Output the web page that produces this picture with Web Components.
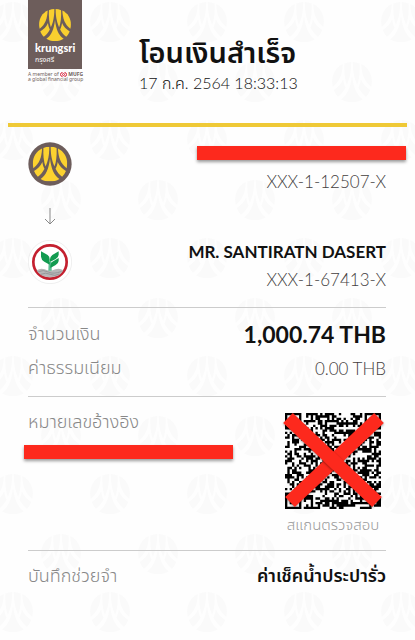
<!DOCTYPE html>
<html lang="th">
<head>
<meta charset="utf-8">
<meta name="viewport" content="width=device-width, initial-scale=1">
<title>โอนเงินสำเร็จ</title>
<style>
    body {
        margin: 0;
        background: #fefefe;
        color: #111;
        font-family: Lato, "Noto Sans Thai", "Noto Sans", sans-serif;
    }
</style>
</head>
<body>
<transfer-slip></transfer-slip>

<script>
const petals = `
    <path d="M27 5C26 30 20 48 2 62C-4 36 7 15 27 5Z"/>
    <path d="M31 4Q39 0 48 0C48 25 44 42 37 57C32 44 30 25 31 4Z"/>
    <path d="M69 4Q61 0 52 0C52 25 56 42 63 57C68 44 70 25 69 4Z"/>
    <path d="M73 5C74 30 80 48 98 62C104 36 93 15 73 5Z"/>
    <path d="M28 44C29 52 31 58 34 64C29 74 22 82 15 87Q8 80 4 70C14 64 23 56 28 44Z"/>
    <path d="M72 44C71 52 69 58 66 64C71 74 78 82 85 87Q92 80 96 70C86 64 77 56 72 44Z"/>
    <path d="M50 34C53 62 62 84 77 93C61 103 39 103 23 93C38 84 47 62 50 34Z"/>`;

function define(name, html, setup) {
    const template = document.createElement('template');
    template.innerHTML = html;
    customElements.define(name, class extends HTMLElement {
        constructor() {
            super();
            this.attachShadow({ mode: 'open' }).appendChild(template.content.cloneNode(true));
        }
        connectedCallback() {
            if (setup) setup(this.shadowRoot, this);
        }
    });
}

define('slip-watermark', `
    <style>
        :host { position: absolute; inset: 0; z-index: -1; overflow: hidden; }
        svg { display: block; width: 100%; height: 100%; }
    </style>
    <svg aria-hidden="true">
        <defs>
            <symbol id="mark" viewBox="0 0 100 100">${petals}</symbol>
            <pattern id="tile" x="-36" y="0" width="97" height="118" patternUnits="userSpaceOnUse" fill="#fafafa">
                <use href="#mark" x="29" y="2" width="40" height="40"/>
                <use href="#mark" x="-20" y="62" width="40" height="40"/>
                <use href="#mark" x="77" y="62" width="40" height="40"/>
            </pattern>
        </defs>
        <rect width="100%" height="100%" fill="url(#tile)"/>
    </svg>`);

define('krungsri-logo', `
    <style>
        :host { display: block; width: 54px; color: #6d5d5b; }
        .box { display: flex; flex-direction: column; height: 69px; box-sizing: border-box; padding: 9px 7px 0; background: #6d5d5b; color: #fff; }
        .box svg { display: block; width: 32px; height: 32px; margin: 0 auto 1px; fill: #f9cf2f; }
        .name { font-size: 11px; line-height: 12px; font-weight: 900; }
        .thai { font-size: 7px; line-height: 10px; }
        .member { width: max-content; margin-top: 3px; font: 5px/5px "Noto Sans", sans-serif; }
        .member svg { width: 7px; height: 5px; vertical-align: top; }
    </style>
    <div class="box">
        <svg viewBox="0 0 100 100">${petals}</svg>
        <span class="name">krungsri</span>
        <span class="thai">กรุงศรี</span>
    </div>
    <div class="member">A member of <svg viewBox="0 0 14 10" fill="none" stroke="#d8213b" stroke-width="2"><path d="M5 1a4 4 0 0 0 0 8M9 1a4 4 0 0 1 0 8"/><circle cx="7" cy="5" r="2"/></svg> <b>MUFG</b><br>a global financial group</div>`);

define('bank-badge', `
    <style>
        :host { display: block; width: 44px; height: 44px; }
        .badge { display: block; width: 100%; height: 100%; }
    </style>
    <svg class="badge" viewBox="0 0 132 132"></svg>`, (root, host) => {
    const marks = {
        krungsri: `
            <circle cx="66" cy="66" r="65" fill="#6d5d5b"/>
            <svg x="14" y="14" width="104" height="104" viewBox="0 0 100 100" fill="#fcd22f">${petals}</svg>`,
        kasikorn: `
            <circle cx="66" cy="66" r="65" fill="#fff" stroke="#e7e7e7" stroke-width="2"/>
            <circle cx="66" cy="66" r="50" fill="#fff" stroke="#c4202f" stroke-width="8"/>
            <path d="M26 91Q38 83 50 88Q66 95 82 88Q95 83 106 91Q99 105 85 109Q66 115 47 109Q32 103 26 91Z" fill="#b6b7b8"/>
            <path d="M31 95Q46 88 61 96T101 94M39 103Q53 96 67 103T94 102" fill="none" stroke="#858889" stroke-width="2"/>
            <path d="M61 92L62 66H71V92Z" fill="#58bd91"/>
            <path d="M39 34L59 45Q65 49 65 58V74L49 65Q40 60 39 50Z" fill="#129b50"/>
            <path d="M92 34V44Q91 53 83 57L66 66V58Q66 50 73 45Z" fill="#129b50"/>
            <path d="M92 54V63Q91 71 83 75L67 84V77Q67 70 73 65Z" fill="#129b50"/>`
    };
    root.querySelector('.badge').innerHTML = marks[host.getAttribute('bank')];
});

define('redaction-bar', `
    <style>
        :host { display: block; height: 14px; background: #fd291d; box-shadow: 0 2px 3px rgba(0, 0, 0, .4); }
    </style>`);

define('slip-header', `
    <style>
        :host { display: flex; height: 123px; margin: 0 8px; padding: 0 20px; border-bottom: 4px solid #efc936; }
        .title { margin-left: 57px; padding-top: 32px; }
        h1 { margin: 0; font-size: 29px; line-height: 40px; font-weight: 600; white-space: nowrap; }
        time { display: block; font-size: 16px; line-height: 22px; font-weight: 300; white-space: nowrap; }
    </style>
    <krungsri-logo></krungsri-logo>
    <div class="title">
        <h1><slot></slot></h1>
        <time datetime="2021-07-17T18:33:13">17 ก.ค. 2564 18:33:13</time>
    </div>`);

define('slip-account', `
    <style>
        :host { display: flex; justify-content: space-between; align-items: flex-start; }
        .info { display: flex; flex-direction: column; align-items: flex-end; }
        .name { display: flex; height: 22px; align-items: center; font-size: 17px; font-weight: 700; }
        .number { font-size: 17px; line-height: 36px; font-weight: 300; color: #443e3e; }
    </style>
    <slot name="badge"></slot>
    <div class="info">
        <div class="name"><slot name="name"></slot></div>
        <div class="number"><slot></slot></div>
    </div>`);

define('slip-row', `
    <style>
        :host { display: flex; justify-content: space-between; align-items: center; height: 34px; }
        .label { font-size: 18px; font-weight: 300; color: #888; }
        .value { font-size: 17px; font-weight: 300; color: #443e3e; }
        :host([strong]) .value { font-size: 18px; font-weight: 600; color: #111; }
        :host([large]) .value { font-size: 23px; font-weight: 700; }
    </style>
    <span class="label"><slot name="label"></slot></span>
    <span class="value"><slot></slot></span>`);

define('qr-code', `
    <style>
        :host { display: block; position: relative; width: 96px; height: 96px; }
        svg { display: block; width: 100%; height: 100%; overflow: visible; }
        .cross { position: absolute; inset: 0; }
        .cross path { filter: drop-shadow(0 1px 1px rgba(0, 0, 0, .4)); }
    </style>
    <svg class="code" viewBox="0 0 41 41"><path/></svg>
    <svg class="cross" viewBox="0 0 96 96" stroke="#fd291d" stroke-width="14">
        <path d="M94 5L5 89"/>
        <path d="M3 5L92 89"/>
    </svg>`, root => {
    const size = 41;
    const finder = (x, y) => {
        const ring = Math.max(Math.abs(x - 3), Math.abs(y - 3));
        return ring === 3 || ring < 2;
    };
    let seed = 2564;
    let d = '';
    for (let y = 0; y < size; y++) {
        for (let x = 0; x < size; x++) {
            seed = (seed * 1103515245 + 12345) % 2147483648;
            let on = seed / 2147483648 < 0.52;
            const fx = x > 32 ? x - 34 : x;
            const fy = y > 32 ? y - 34 : y;
            if (fx < 8 && fy < 8 && !(x > 32 && y > 32)) {
                on = fx >= 0 && fy >= 0 && fx < 7 && fy < 7 && finder(fx, fy);
            }
            if (on) d += `M${x} ${y}h1v1h-1z`;
        }
    }
    root.querySelector('.code path').setAttribute('d', d);
});

define('transfer-slip', `
    <style>
        :host { display: block; position: relative; z-index: 0; min-height: 100vh; overflow: hidden; }
        main { padding: 0 29px 0 28px; }
        section { border-bottom: 1px solid #ccc; }
        .accounts { padding: 15px 0 9px; }
        .accounts redaction-bar { width: 209px; margin-right: -20px; }
        .arrow { display: block; width: 12px; height: 18px; margin: 7px 16px 15px; fill: none; stroke: #888; }
        .amounts { padding: 9px 0 11px; }
        .reference { display: flex; justify-content: space-between; padding: 7px 0 14px; }
        .reference h2 { margin: 0; font-size: 18px; line-height: 34px; font-weight: 300; color: #888; }
        .reference redaction-bar { width: 209px; margin: 7px 0 0 -4px; }
        figure { display: flex; flex-direction: column; align-items: center; margin: 9px 5px 0 0; }
        figcaption { margin-top: 3px; font-size: 15px; line-height: 24px; font-weight: 300; color: #999; white-space: nowrap; }
        .memo { padding-top: 8px; border: 0; }
    </style>
    <slip-watermark></slip-watermark>
    <slip-header>โอนเงินสำเร็จ</slip-header>
    <main>
        <section class="accounts">
            <slip-account>
                <bank-badge slot="badge" bank="krungsri"></bank-badge>
                <redaction-bar slot="name"></redaction-bar>
                XXX-1-12507-X
            </slip-account>
            <svg class="arrow" viewBox="0 0 12 18"><path d="M6 1V17M1 12L6 17L11 12"/></svg>
            <slip-account>
                <bank-badge slot="badge" bank="kasikorn"></bank-badge>
                <span slot="name">MR. SANTIRATN DASERT</span>
                XXX-1-67413-X
            </slip-account>
        </section>
        <section class="amounts">
            <slip-row strong large><span slot="label">จำนวนเงิน</span>1,000.74 THB</slip-row>
            <slip-row><span slot="label">ค่าธรรมเนียม</span>0.00 THB</slip-row>
        </section>
        <section class="reference">
            <div>
                <h2>หมายเลขอ้างอิง</h2>
                <redaction-bar></redaction-bar>
            </div>
            <figure>
                <qr-code></qr-code>
                <figcaption>สแกนตรวจสอบ</figcaption>
            </figure>
        </section>
        <section class="memo">
            <slip-row strong><span slot="label">บันทึกช่วยจำ</span>ค่าเช็คน้ำประปารั่ว</slip-row>
        </section>
    </main>`);
</script>
</body>
</html>
